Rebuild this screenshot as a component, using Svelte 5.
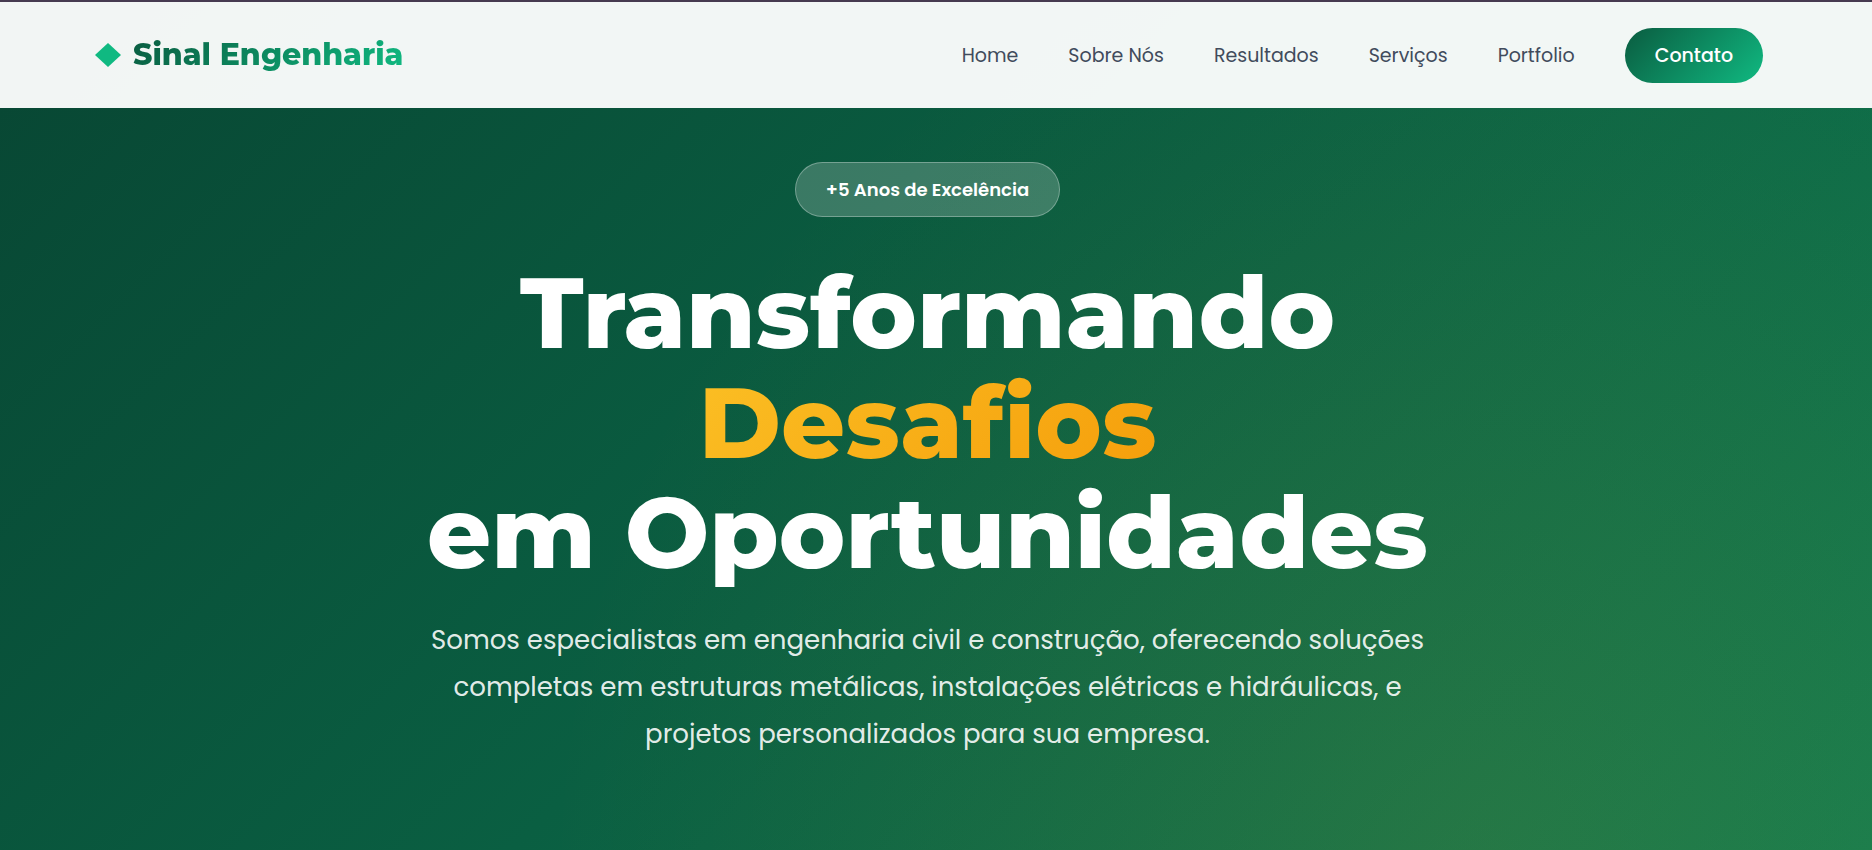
<script>
  const links = [
    { label: "Home", href: "#home" },
    { label: "Sobre Nós", href: "#sobre" },
    { label: "Resultados", href: "#resultados" },
    { label: "Serviços", href: "#servicos" },
    { label: "Portfolio", href: "#portfolio" },
  ];
</script>

<div class="page">
  <header>
    <a class="logo" href="#home">
      <svg width="26" height="24" viewBox="0 0 26 24" aria-hidden="true">
        <path d="M13 0 26 12 13 24 0 12Z" fill="#10b981" />
      </svg>
      <span>Sinal Engenharia</span>
    </a>
    <nav>
      {#each links as link}
        <a href={link.href}>{link.label}</a>
      {/each}
      <a class="cta" href="#contato">Contato</a>
    </nav>
  </header>

  <main>
    <p class="badge">+5 Anos de Excelência</p>
    <h1>Transformando<br /><span>Desafios</span><br />em Oportunidades</h1>
    <p class="lead">
      Somos especialistas em engenharia civil e construção, oferecendo soluções completas em
      estruturas metálicas, instalações elétricas e hidráulicas, e projetos personalizados para sua
      empresa.
    </p>
  </main>
</div>

<style>
  :global(body) {
    margin: 0;
  }

  .page {
    box-sizing: border-box;
    min-height: 100vh;
    border-top: 2px solid #463a50;
    font-family: Poppins, "Open Sans", sans-serif;
    background:
      radial-gradient(ellipse 50% 115% at 79% 103%, rgba(245, 158, 11, 0.1), transparent),
      linear-gradient(135deg, #084633 0%, #0a5f42 50%, #107c50 100%);
  }

  header {
    box-sizing: border-box;
    display: flex;
    align-items: center;
    justify-content: space-between;
    height: 106px;
    padding: 0 109px 0 95px;
    background: rgba(255, 255, 255, 0.95);
  }

  .logo {
    display: flex;
    align-items: center;
    gap: 12px;
    text-decoration: none;
    font: 800 30px/36px Montserrat, "Open Sans", sans-serif;
  }

  .logo span {
    color: transparent;
    background: linear-gradient(135deg, #0a5c40, #10b981);
    background-clip: text;
  }

  nav {
    display: flex;
    align-items: center;
    gap: 50px;
  }

  nav a {
    color: #414b5c;
    font-size: 19px;
    line-height: 31px;
    text-decoration: none;
  }

  nav .cta {
    padding: 12px 30px;
    border-radius: 28px;
    color: #fff;
    font-weight: 500;
    background: linear-gradient(135deg, #0a5c40, #10b981);
  }

  main {
    display: flex;
    flex-direction: column;
    align-items: center;
    padding: 54px 17px 60px 0;
    text-align: center;
    color: #fff;
  }

  .badge {
    margin: 0;
    padding: 12px 30px;
    border: 1px solid rgba(255, 255, 255, 0.3);
    border-radius: 28px;
    font-size: 18px;
    font-weight: 600;
    line-height: 29px;
    background: rgba(255, 255, 255, 0.2);
  }

  h1 {
    margin: 40px 0 30px;
    font: 800 100px/110px Montserrat, "Open Sans", sans-serif;
  }

  h1 span {
    color: transparent;
    background: linear-gradient(135deg, #fbbf24, #f59e0b);
    background-clip: text;
  }

  .lead {
    max-width: 1000px;
    margin: 0;
    font-size: 26px;
    line-height: 47px;
    color: rgba(255, 255, 255, 0.9);
  }
</style>
